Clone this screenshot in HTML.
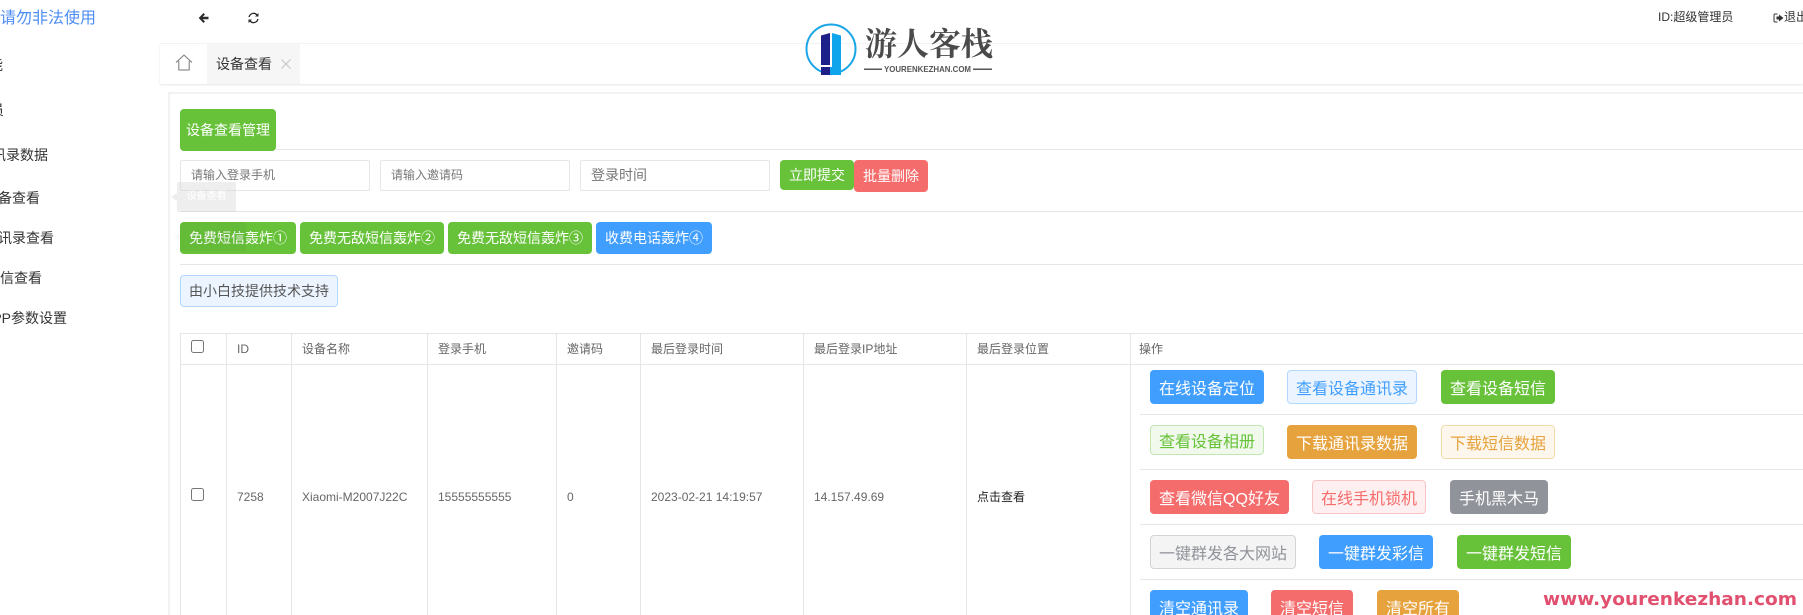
<!DOCTYPE html>
<html lang="zh"><head><meta charset="utf-8"><title>设备查看</title>
<style>
html,body{margin:0;padding:0;background:#fff;width:1803px;height:615px;overflow:hidden}
body{position:relative;font-family:"Liberation Sans","Noto Sans CJK SC",sans-serif;color:#333}
#r{position:absolute;left:0;top:0;width:1803px;height:615px;overflow:hidden}
#r div,#r span.a{position:absolute;white-space:nowrap}
.t{font-size:12px;line-height:16px;color:#666}
.s{font-size:14px;line-height:20px;color:#333;transform:translateX(-100%)}
.hl{background:#e6e6e6;height:1px}
.vl{background:#e6e6e6;width:1px;top:333px;height:282px}
.b{box-sizing:border-box;border-radius:4px;display:flex;align-items:center;justify-content:center;font-size:16px;color:#fff;border:1px solid transparent}
.sb{font-size:14px}
.g{background:#67c23a}.bl{background:#409eff}.o{background:#e6a23c}.rd{background:#f56c6c}.gy{background:#909399}
.pb{background:#ecf5ff;border-color:#b3d8ff;color:#409eff}
.pg{background:#f0f9eb;border-color:#c2e7b0;color:#67c23a}
.po{background:#fdf6ec;border-color:#f5dab1;color:#e6a23c}
.pr{background:#fef0f0;border-color:#fbc4c4;color:#f56c6c}
.py{background:#f4f4f5;border-color:#d3d4d6;color:#909399}
.in{box-sizing:border-box;border:1px solid #e6e6e6;border-radius:2px;background:#fff;height:31px;top:160px;width:190px;padding-left:10px;line-height:29px;font-size:12px;color:#777}
.c{box-sizing:border-box;width:13px;height:13px;border:1px solid #767676;border-radius:2.5px;background:#fff}
</style></head><body><div id="r">

<!-- sidebar -->
<div style="left:0px;top:8px;font-size:16px;line-height:22px;color:#4d8df5">请勿非法使用</div>
<div class="s" style="left:3px;top:55px">功能</div>
<div class="s" style="left:4px;top:100px">会员</div>
<div class="s" style="left:48px;top:145px">通讯录数据</div>
<div class="s" style="left:40px;top:188px">设备查看</div>
<div class="s" style="left:54px;top:228px">通讯录查看</div>
<div class="s" style="left:42px;top:268px">短信查看</div>
<div class="s" style="left:67px;top:308px">APP参数设置</div>

<!-- top bar -->
<svg style="position:absolute;left:198px;top:12px" width="11" height="12" viewBox="0 0 11 12"><path d="M5.5 1 .7 6l4.8 5 1.5-1.500L4.700 7.200H10.500V4.800H4.700L7 2.500z" fill="#2b2b2b"/></svg>
<svg style="position:absolute;left:248px;top:12px" width="11" height="12" viewBox="0 0 11 12"><path d="M1.800 5A3.800 3.800 0 0 1 8.300 3.200L7 4.500h3.500V1L9.300 2.200A5.300 5.300 0 0 0 .4 5zM9.200 7A3.800 3.800 0 0 1 2.700 8.800L4 7.500H.5V11l1.200-1.200A5.300 5.300 0 0 0 10.600 7z" fill="#2b2b2b"/></svg>
<div style="left:160px;top:43px;width:1643px;height:1px;background:#f4f4f4"></div>
<div style="left:1658px;top:9px;font-size:12px;line-height:16px;color:#333">ID:超级管理员</div>
<svg style="position:absolute;left:1773px;top:12px" width="11" height="12" viewBox="0 0 11 12"><path d="M4.500 2H2.200C1.500 2 1 2.500 1 3.200v5.600C1 9.500 1.500 10 2.200 10H4.500" fill="none" stroke="#333" stroke-width="1"/><path d="M6 2.500 10.500 6 6 9.500V7.500H3.500v-3H6z" fill="#333"/></svg>
<div style="left:1784px;top:9px;font-size:12px;line-height:16px;color:#333">退出</div>

<!-- tabs -->
<div style="left:160px;top:44px;width:1643px;height:40px;background:#fff;box-shadow:0 1px 2px rgba(0,0,0,.1)"></div>
<svg style="position:absolute;left:175px;top:54px" width="18" height="17" viewBox="0 0 18 17"><path d="M1 8.500 9 1l8 7.500M3.800 7v9h10.400V7" fill="none" stroke="#777" stroke-width="1"/></svg>
<div style="left:207px;top:44px;width:93px;height:40px;background:#f6f6f6"></div>
<div style="left:216px;top:54px;font-size:14px;line-height:20px;color:#333">设备查看</div>
<svg style="position:absolute;left:281px;top:59px" width="10" height="10" viewBox="0 0 10 10"><path d="M.5.500l9 9M9.500.500l-9 9" stroke="#c4c4c4" stroke-width="1"/></svg>

<!-- card -->
<div style="left:168px;top:92px;width:1635px;height:2px;background:#f2f2f2"></div>
<div style="left:168px;top:92px;width:2px;height:523px;background:#f2f2f2"></div>

<div class="b sb g" style="left:180px;top:109px;width:96px;height:42px">设备查看管理</div>
<div class="hl" style="left:276px;top:149px;width:1527px"></div>

<div class="in" style="left:180px">请输入登录手机</div>
<div class="in" style="left:380px">请输入邀请码</div>
<div class="in" style="left:580px;font-size:14px">登录时间</div>
<div class="b sb g" style="left:780px;top:160px;width:74px;height:30px">立即提交</div>
<div class="b sb rd" style="left:854px;top:160px;width:74px;height:32px">批量删除</div>
<div class="hl" style="left:180px;top:211px;width:1623px"></div>

<div class="b sb g" style="left:180px;top:222px;width:116px;height:32px">免费短信轰炸①</div>
<div class="b sb g" style="left:300px;top:222px;width:144px;height:32px">免费无敌短信轰炸②</div>
<div class="b sb g" style="left:448px;top:222px;width:144px;height:32px">免费无敌短信轰炸③</div>
<div class="b sb bl" style="left:596px;top:222px;width:116px;height:32px">收费电话轰炸④</div>
<div class="hl" style="left:180px;top:264px;width:1623px"></div>

<div class="b sb" style="left:180px;top:275px;width:158px;height:32px;background:#ecf5ff;border-color:#b3d8ff;color:#555">由小白技提供技术支持</div>

<!-- tooltips -->
<div style="left:177px;top:182px;width:59px;height:30px;background:rgba(215,215,215,.42);font-size:10px;line-height:30px;text-align:center;color:#fff;border-radius:2px">设备查看</div>
<div style="left:171px;top:193px;width:0;height:0;border:4px solid transparent;border-left:0;border-right:6px solid rgba(215,215,215,.42)"></div>
<div style="left:180px;top:222px;width:66px;height:29px;background:rgba(0,0,0,.035);border-radius:4px 0 0 0"></div>
<div style="left:174px;top:233px;width:0;height:0;border:4px solid transparent;border-left:0;border-right:6px solid rgba(0,0,0,.03)"></div>

<!-- table -->
<div class="hl" style="left:180px;top:333px;width:1623px"></div>
<div class="hl" style="left:180px;top:364px;width:1623px"></div>
<div class="vl" style="left:180px"></div>
<div class="vl" style="left:226px"></div>
<div class="vl" style="left:291px"></div>
<div class="vl" style="left:427px"></div>
<div class="vl" style="left:556px"></div>
<div class="vl" style="left:640px"></div>
<div class="vl" style="left:803px"></div>
<div class="vl" style="left:966px"></div>
<div class="vl" style="left:1130px"></div>

<div class="c" style="left:191px;top:340px"></div>
<div class="t" style="left:237px;top:341px">ID</div>
<div class="t" style="left:302px;top:341px">设备名称</div>
<div class="t" style="left:438px;top:341px">登录手机</div>
<div class="t" style="left:567px;top:341px">邀请码</div>
<div class="t" style="left:651px;top:341px">最后登录时间</div>
<div class="t" style="left:814px;top:341px">最后登录IP地址</div>
<div class="t" style="left:977px;top:341px">最后登录位置</div>
<div class="t" style="left:1139px;top:341px">操作</div>

<div class="c" style="left:191px;top:488px"></div>
<div class="t" style="left:237px;top:489px">7258</div>
<div class="t" style="left:302px;top:489px">Xiaomi-M2007J22C</div>
<div class="t" style="left:438px;top:489px">15555555555</div>
<div class="t" style="left:567px;top:489px">0</div>
<div class="t" style="left:651px;top:489px">2023-02-21 14:19:57</div>
<div class="t" style="left:814px;top:489px">14.157.49.69</div>
<div class="t" style="left:977px;top:489px;color:#222">点击查看</div>

<!-- op buttons -->
<div class="b bl" style="left:1150px;top:370px;width:114px;height:34px">在线设备定位</div>
<div class="b pb" style="left:1287px;top:370px;width:130px;height:34px">查看设备通讯录</div>
<div class="b g" style="left:1441px;top:370px;width:114px;height:34px">查看设备短信</div>
<div class="hl" style="left:1140px;top:414px;width:663px"></div>

<div class="b pg" style="left:1150px;top:425px;width:114px;height:30px">查看设备相册</div>
<div class="b o" style="left:1287px;top:425px;width:130px;height:34px">下载通讯录数据</div>
<div class="b po" style="left:1441px;top:425px;width:114px;height:34px">下载短信数据</div>
<div class="hl" style="left:1140px;top:469px;width:663px"></div>

<div class="b rd" style="left:1150px;top:480px;width:139px;height:34px">查看微信QQ好友</div>
<div class="b pr" style="left:1312px;top:480px;width:114px;height:34px">在线手机锁机</div>
<div class="b gy" style="left:1450px;top:480px;width:98px;height:34px">手机黑木马</div>
<div class="hl" style="left:1140px;top:524px;width:663px"></div>

<div class="b py" style="left:1150px;top:535px;width:146px;height:34px">一键群发各大网站</div>
<div class="b bl" style="left:1319px;top:535px;width:114px;height:34px">一键群发彩信</div>
<div class="b g" style="left:1457px;top:535px;width:114px;height:34px">一键群发短信</div>
<div class="hl" style="left:1140px;top:579px;width:663px"></div>

<div class="b bl" style="left:1150px;top:590px;width:98px;height:34px">清空通讯录</div>
<div class="b rd" style="left:1271px;top:590px;width:82px;height:34px">清空短信</div>
<div class="b o" style="left:1377px;top:590px;width:82px;height:34px">清空所有</div>

<!-- watermark logo -->
<svg style="position:absolute;left:800px;top:20px" width="66" height="60" viewBox="0 0 66 60">
<circle cx="31" cy="29" r="24.500" fill="none" stroke="#1aa5e8" stroke-width="2"/>
<rect x="0" y="55" width="66" height="5" fill="#fff"/>
<path d="M21 15.500l9-2.500v32h-9z" fill="#1d2088"/><path d="M21 47h9v8h-9z" fill="#1d2088"/>
<path d="M32 13l9 2.500V55h-11V47h2z" fill="#0ea5ec"/>
</svg>
<div style="left:865px;top:22px;font-family:'Liberation Serif','Noto Serif CJK SC',serif;font-weight:700;font-size:32px;line-height:44px;color:#4a4a4a">游人客栈</div>
<svg style="position:absolute;left:860px;top:60px" width="136" height="18"><rect x="4" y="8.500" width="18" height="1.500" fill="#555"/><rect x="113" y="8.500" width="19" height="1.500" fill="#555"/><text x="24" y="12" font-family="Liberation Sans" font-weight="700" font-size="8.500" textLength="87" lengthAdjust="spacingAndGlyphs" fill="#555">YOURENKEZHAN.COM</text></svg>

<svg style="position:absolute;left:1540px;top:585px" width="263" height="30"><text x="3" y="20" font-family="DejaVu Sans" font-weight="700" font-size="18" textLength="254" lengthAdjust="spacingAndGlyphs" fill="#e2506f">www.yourenkezhan.com</text></svg>
</div></body></html>
